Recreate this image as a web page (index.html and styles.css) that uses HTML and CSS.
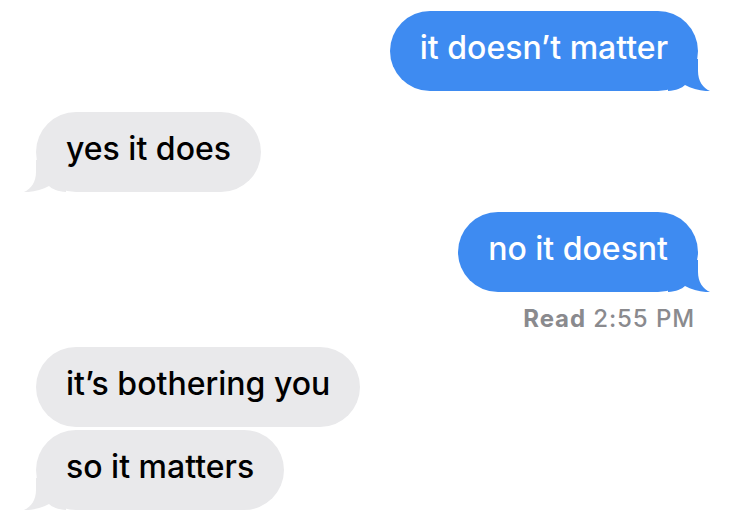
FILE: index.html
```html
<!DOCTYPE html>
<html lang="en">
<head>
<meta charset="utf-8">
<title>Messages</title>
<link rel="stylesheet" href="styles.css">
</head>
<body>
<main class="thread">
  <div class="bubble out">
    <span class="text">it doesn’t matter</span>
    <svg class="tail" viewBox="0 0 44 32" aria-hidden="true"><path d="M0 0H30V12C30 22 35 29 42 32C34 32.5 24 30 17 26C14 29 8 31.5 0 32Z"/></svg>
  </div>
  <div class="bubble in first">
    <span class="text">yes it does</span>
    <svg class="tail" viewBox="0 0 44 32" aria-hidden="true"><path d="M0 0H30V12C30 22 35 29 42 32C34 32.5 24 30 17 26C14 29 8 31.5 0 32Z"/></svg>
  </div>
  <div class="bubble out second">
    <span class="text">no it doesnt</span>
    <svg class="tail" viewBox="0 0 44 32" aria-hidden="true"><path d="M0 0H30V12C30 22 35 29 42 32C34 32.5 24 30 17 26C14 29 8 31.5 0 32Z"/></svg>
  </div>
  <div class="receipt"><b>Read</b> 2:55 PM</div>
  <div class="bubble in group">
    <span class="text">it’s bothering you</span>
  </div>
  <div class="bubble in joined">
    <span class="text">so it matters</span>
    <svg class="tail" viewBox="0 0 44 32" aria-hidden="true"><path d="M0 0H30V12C30 22 35 29 42 32C34 32.5 24 30 17 26C14 29 8 31.5 0 32Z"/></svg>
  </div>
</main>
</body>
</html>
```
FILE: styles.css
```css
html, body {
  margin: 0;
  padding: 0;
  background: #ffffff;
}

.thread {
  display: flex;
  flex-direction: column;
  padding: 11px 37px 0 36px;
  font-family: Inter, "Noto Sans", sans-serif;
}

.bubble {
  position: relative;
  height: 80px;
  border-radius: 40px;
  padding: 0 30px;
  display: flex;
  align-items: center;
  font-size: 32px;
  font-weight: 500;
  letter-spacing: 0;
  box-sizing: border-box;
}

.bubble .text {
  position: relative;
  z-index: 1;
  padding-bottom: 8px;
}

.bubble.out {
  align-self: flex-end;
  background: #3e8bf1;
  color: #ffffff;
}

.bubble.in {
  align-self: flex-start;
  background: #e9e9eb;
  color: #000000;
}

.tail {
  position: absolute;
  bottom: 0;
  width: 44px;
  height: 32px;
}

.out .tail {
  right: -14px;
  fill: #3e8bf1;
}

.in .tail {
  left: -14px;
  fill: #e9e9eb;
  transform: scaleX(-1);
}

.first {
  margin-top: 21px;
}

.second {
  margin-top: 20px;
}

.receipt {
  align-self: flex-end;
  margin-top: 13px;
  margin-right: 3px;
  font-size: 24px;
  line-height: 28px;
  letter-spacing: 0.9px;
  font-weight: 500;
  color: #8a8a8e;
}

.receipt b {
  font-weight: 700;
}

.group {
  margin-top: 14px;
}

.joined {
  margin-top: 3px;
}
```
